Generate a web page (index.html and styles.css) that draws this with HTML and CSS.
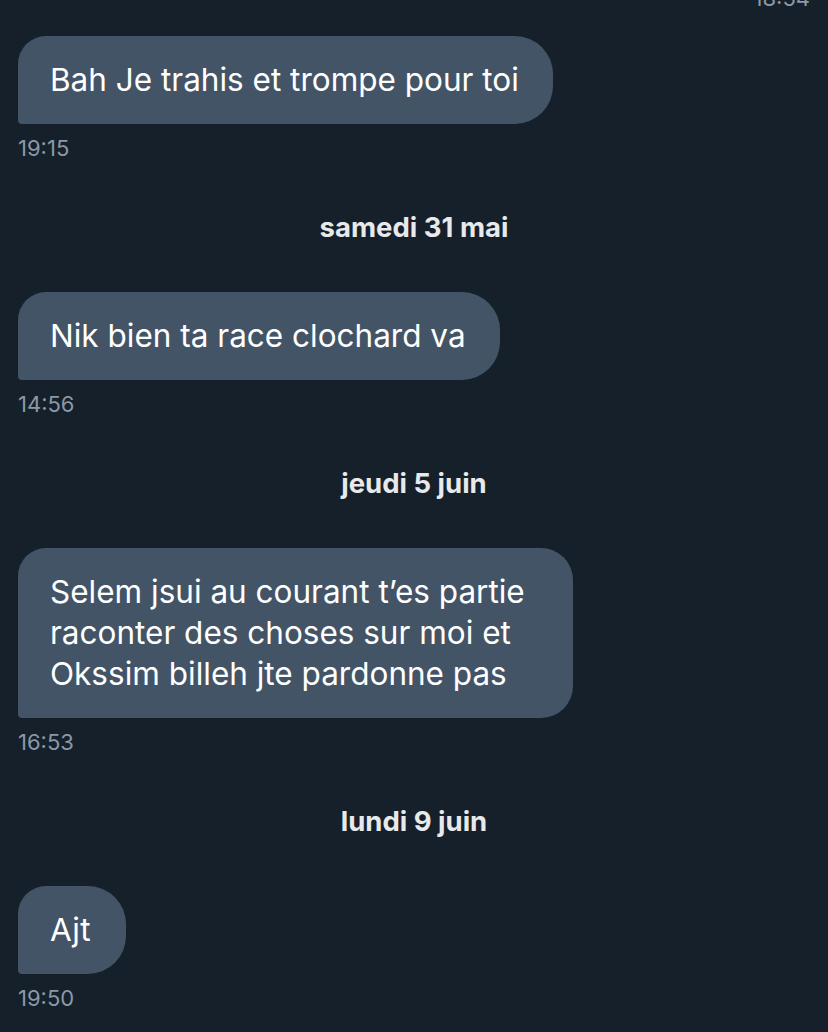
FILE: index.html
```html
<!DOCTYPE html>
<html lang="fr">
<head>
<meta charset="utf-8">
<link rel="stylesheet" href="styles.css">
</head>
<body>
<div class="chat">
  <div class="time time-sent">18:54</div>

  <div class="msg">
    <div class="bubble">Bah Je trahis et trompe pour toi</div>
    <div class="time">19:15</div>
  </div>

  <div class="day">samedi 31 mai</div>

  <div class="msg">
    <div class="bubble">Nik bien ta race clochard va</div>
    <div class="time">14:56</div>
  </div>

  <div class="day">jeudi 5 juin</div>

  <div class="msg">
    <div class="bubble bubble-wrapped">Selem jsui au courant t’es partie<br>raconter des choses sur moi et<br>Okssim billeh jte pardonne pas</div>
    <div class="time">16:53</div>
  </div>

  <div class="day">lundi 9 juin</div>

  <div class="msg">
    <div class="bubble bubble-short">Ajt</div>
    <div class="time">19:50</div>
  </div>
</div>
</body>
</html>
```

FILE: styles.css
```css
html, body {
  margin: 0;
  padding: 0;
  background: #15202b;
  height: 100%;
  overflow: hidden;
}

.chat {
  display: flex;
  flex-direction: column;
  padding: 0 18px;
  font-family: Inter, "Noto Sans", sans-serif;
}

.msg {
  display: flex;
  flex-direction: column;
  align-items: flex-start;
}

.bubble {
  background: #435466;
  color: #ffffff;
  font-size: 31.5px;
  line-height: 41px;
  padding: 23px 34px 24px 32px;
  border-radius: 28px 38px 38px 4px;
}

.bubble-wrapped {
  padding-right: 48px;
  border-radius: 28px 32px 32px 4px;
}

.bubble-short {
  padding-right: 35px;
  letter-spacing: 0.5px;
}

.time {
  margin-top: 12px;
  height: 24px;
  line-height: 24px;
  font-size: 22px;
  color: #8b98a5;
}

.time-sent {
  align-self: flex-end;
  margin-top: -14px;
  margin-bottom: 26px;
}

.day {
  align-self: center;
  margin: 51px 0 49px;
  height: 32px;
  line-height: 32px;
  font-size: 27.5px;
  font-weight: 700;
  color: #e7e9ea;
}
```
